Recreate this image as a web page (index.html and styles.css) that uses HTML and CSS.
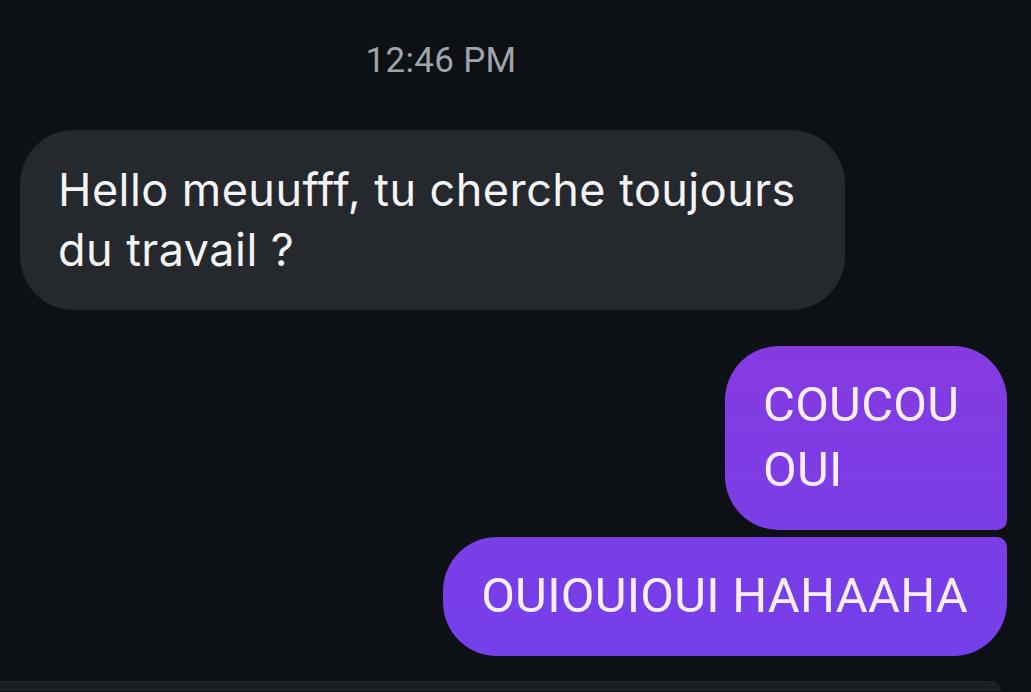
FILE: index.html
```html
<!doctype html>
<html lang="fr">
<head>
    <meta charset="UTF-8">
    <meta name="viewport" content="width=device-width, initial-scale=1.0">
    <title>Messages</title>
    <link rel="stylesheet" href="styles.css">
</head>
<body>
<div class="thread">
    <div class="time">12:46 PM</div>

    <div class="msg msg-in">
        Hello meuufff, tu cherche toujours du travail ?
    </div>

    <div class="out-group">
        <div class="msg msg-out first">COUCOU<br>OUI</div>
        <div class="msg msg-out last">OUIOUIOUI HAHAAHA</div>
    </div>
</div>

<!-- champ de saisie (coupé en bas) -->
<div class="composer"></div>
</body>
</html>
```

FILE: styles.css
```css
* {
    margin: 0;
    padding: 0;
    box-sizing: border-box;
}

html, body {
    height: 100%;
    overflow: hidden;
}

body {
    background: #0d1014;
    font-family: Roboto, "Noto Sans", sans-serif;
}

.thread {
    display: flex;
    flex-direction: column;
    padding: 41px 24px 0 20px;
}

.time {
    width: 842px;
    height: 40px;
    line-height: 40px;
    text-align: center;
    font-size: 35px;
    color: #9ea3ac;
    letter-spacing: 0.3px;
}

.msg {
    border-radius: 54px;
}

.msg-in {
    margin-top: 49px;
    width: 825px;
    padding: 30px 10px 30px 38px;
    background: #25282d;
    color: #f4f4f6;
    font-family: Inter, Roboto, sans-serif;
    font-size: 45px;
    line-height: 60px;
    letter-spacing: 0.45px;
}

.out-group {
    margin-top: 36px;
    display: flex;
    flex-direction: column;
    align-items: flex-end;
    gap: 7px;
}

.msg-out {
    padding: 26px 39px 28px 38px;
    color: #fbeeff;
    font-size: 49px;
    line-height: 65px;
    letter-spacing: 0.25px;
    background: linear-gradient(180deg, #863ae0 330px, #7340eb 670px) fixed;
}

.msg-out.first {
    min-width: 282px;
    border-bottom-right-radius: 10px;
}

.msg-out.last {
    border-top-right-radius: 10px;
}

.composer {
    margin: 25px 30px 0 0;
    height: 10px;
    background: #1b1e22;
    border-top: 1px solid #24272b;
    border-top-right-radius: 36px;
}
```
